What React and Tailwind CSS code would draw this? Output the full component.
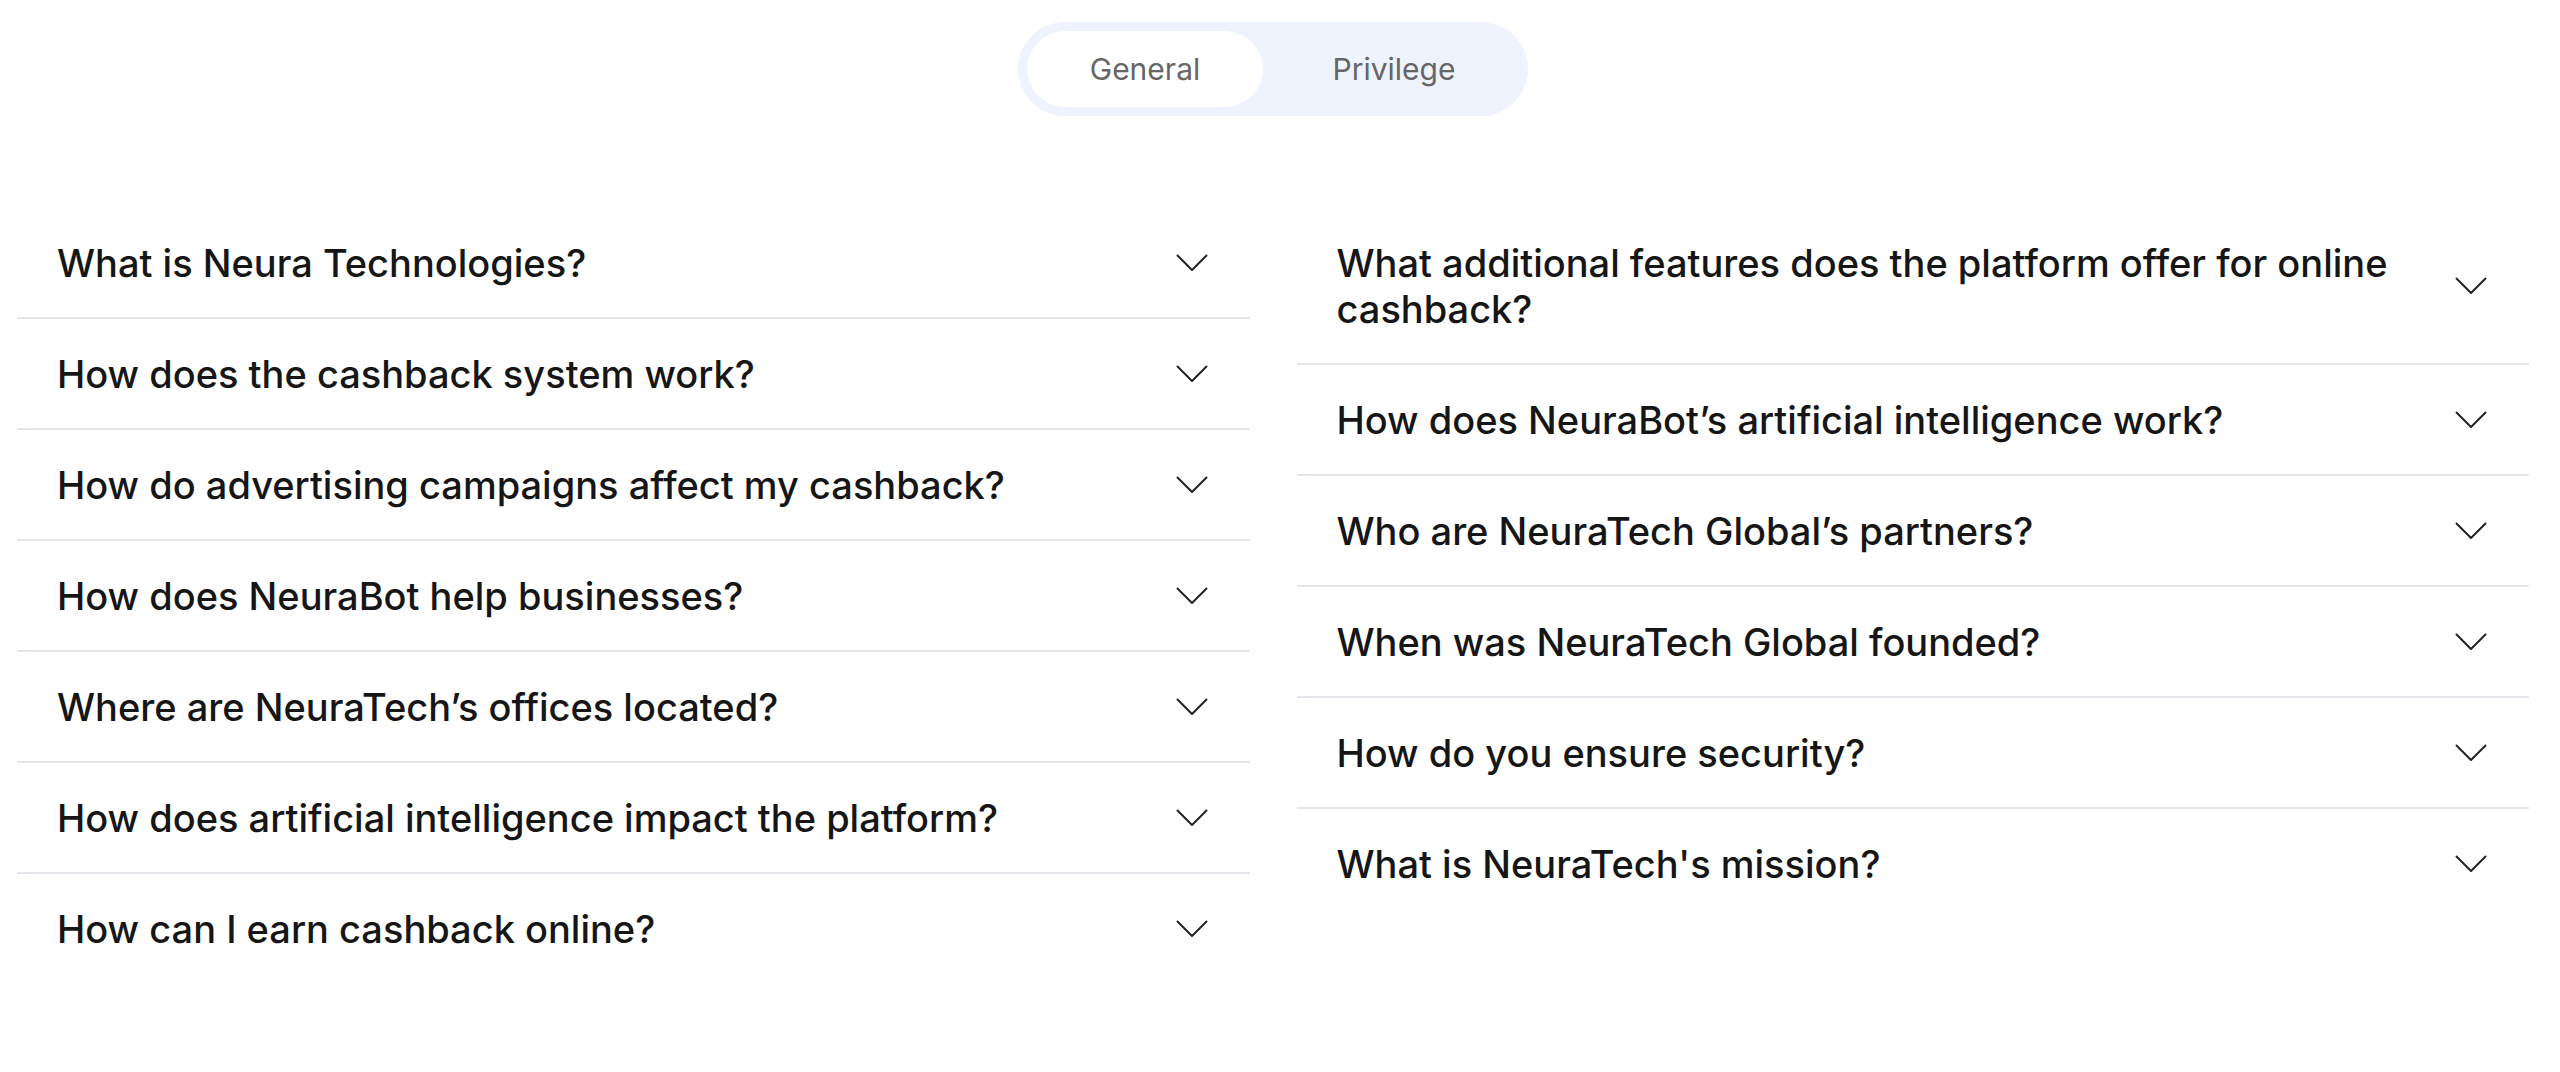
import React from "react";

const left = [
  "What is Neura Technologies?",
  "How does the cashback system work?",
  "How do advertising campaigns affect my cashback?",
  "How does NeuraBot help businesses?",
  "Where are NeuraTech’s offices located?",
  "How does artificial intelligence impact the platform?",
  "How can I earn cashback online?",
];

const right = [
  "What additional features does the platform offer for online cashback?",
  "How does NeuraBot’s artificial intelligence work?",
  "Who are NeuraTech Global’s partners?",
  "When was NeuraTech Global founded?",
  "How do you ensure security?",
  "What is NeuraTech's mission?",
];

function Chevron() {
  return (
    <svg width="32" height="18" viewBox="0 0 32 18" fill="none" className="shrink-0">
      <path
        d="M1.5 1.5 L16 16 L30.5 1.5"
        stroke="#232323"
        strokeWidth="2"
        strokeLinecap="round"
        strokeLinejoin="round"
      />
    </svg>
  );
}

function Row({ q, last }) {
  return (
    <div
      className={
        "flex items-center justify-between gap-8 pl-10 pr-[42px] pt-[32px] pb-[31px] " +
        (last ? "" : "border-b-2 border-[#e3e7ec]")
      }
    >
      <span className="flex-1 text-[38px] leading-[46px] font-medium text-[#161616]">{q}</span>
      <Chevron />
    </div>
  );
}

export default function App() {
  return (
    <div
      className="w-[2546px] min-h-[1072px] bg-white px-[17px] pt-[22px]"
      style={{ fontFamily: "Inter, 'Noto Sans', sans-serif" }}
    >
      <div className="flex justify-center">
        <div className="flex rounded-full bg-[#eef3fd] p-[9px]">
          <button className="w-[236px] h-[76px] rounded-full bg-white text-[30px] text-[#666666]">
            General
          </button>
          <button className="w-[256px] h-[76px] pl-[6px] rounded-full text-[30px] text-[#666666]">
            Privilege
          </button>
        </div>
      </div>
      <div className="mt-[92px] grid grid-cols-2 gap-[47px] items-start">
        <div className="flex flex-col">
          {left.map((q, i) => (
            <Row key={q} q={q} last={i === left.length - 1} />
          ))}
        </div>
        <div className="flex flex-col">
          {right.map((q, i) => (
            <Row key={q} q={q} last={i === right.length - 1} />
          ))}
        </div>
      </div>
    </div>
  );
}
